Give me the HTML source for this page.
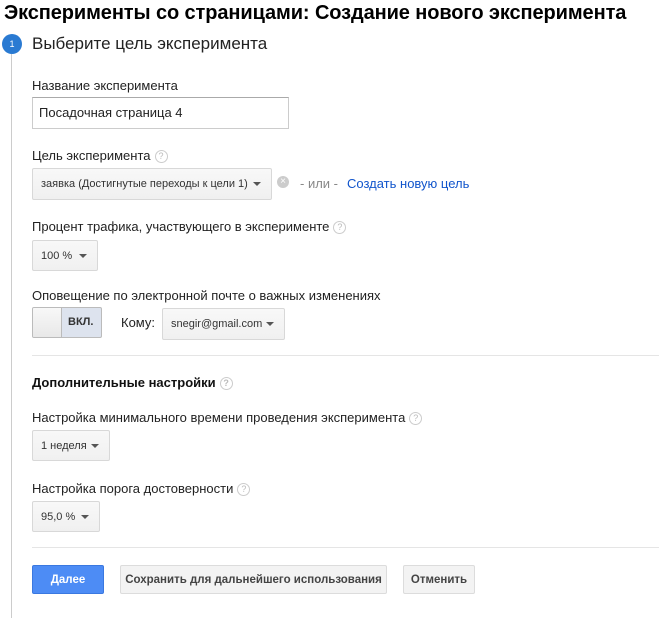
<!DOCTYPE html>
<html><head><meta charset="utf-8"><style>
*{box-sizing:border-box;margin:0;padding:0}
body{width:659px;height:618px;background:#fff;font-family:"Liberation Sans",Arial,sans-serif;color:#222;position:relative;overflow:hidden}
.a{position:absolute;white-space:nowrap}
.lbl{font-size:13px;color:#222}
.q{display:inline-block;width:13px;height:13px;border:1px solid #ccc;border-radius:50%;font-size:9px;color:#bbb;text-align:center;line-height:11px;vertical-align:1px;margin-left:4px}
.sel{position:absolute;border:1px solid #d8d8d8;border-radius:2px;background:linear-gradient(#f8f8f8,#f0f0f0);font-size:11px;color:#333;padding-left:8px;display:flex;align-items:center}
.sel:after{content:"";position:absolute;right:10px;top:50%;margin-top:-2px;border-left:4px solid transparent;border-right:4px solid transparent;border-top:4px solid #555}
.hr{position:absolute;left:32px;right:0;height:1px;background:#e5e5e5}
.btn{position:absolute;top:565px;height:29px;border:1px solid #dcdcdc;border-radius:2px;background:#f3f3f3;font-size:11.5px;font-weight:bold;color:#444;display:flex;align-items:center;justify-content:center;white-space:nowrap}
</style></head><body>
<div class="a" style="left:4px;top:2px;font-size:20px;font-weight:bold;color:#000;letter-spacing:-0.1px">Эксперименты со страницами: Создание нового эксперимента</div>
<div class="a" style="left:11px;top:54px;width:1px;height:564px;background:#ccc"></div>
<div class="a" style="left:2px;top:34px;width:20px;height:20px;border-radius:50%;background:#2a7ad2;color:#fff;font-size:9px;text-align:center;line-height:20px">1</div>
<div class="a" style="left:32px;top:34px;font-size:17px;color:#222">Выберите цель эксперимента</div>
<div class="a lbl" style="left:32px;top:78px">Название эксперимента</div>
<div class="a" style="left:32px;top:97px;width:257px;height:32px;border:1px solid #ccc;border-top-color:#aaa;font-size:13px;padding-left:6px;line-height:30px">Посадочная страница 4</div>
<div class="a lbl" style="left:32px;top:148px">Цель эксперимента<span class="q">?</span></div>
<div class="sel" style="left:32px;top:168px;width:240px;height:32px">заявка (Достигнутые переходы к цели 1)</div>
<div class="a" style="left:277px;top:176px;width:12px;height:12px;border-radius:50%;background:#ccc;color:#fff;font-size:10px;line-height:12px;text-align:center">×</div>
<div class="a" style="left:300px;top:176px;font-size:13px;color:#888">- или -</div>
<div class="a" style="left:347px;top:176px;font-size:13px;color:#15c">Создать новую цель</div>
<div class="a lbl" style="left:32px;top:219px">Процент трафика, участвующего в эксперименте<span class="q">?</span></div>
<div class="sel" style="left:32px;top:240px;width:66px;height:31px">100 %</div>
<div class="a lbl" style="left:32px;top:288px">Оповещение по электронной почте о важных изменениях</div>
<div class="a" style="left:32px;top:307px;width:70px;height:31px;border:1px solid #bbb;border-radius:2px;background:#dde3ee;overflow:hidden">
<div style="position:absolute;left:0;top:0;width:29px;height:29px;background:linear-gradient(#f8f8f8,#e8e8e8);border-right:1px solid #bbb"></div>
<div style="position:absolute;left:35px;top:8px;font-size:11px;font-weight:bold;color:#333">ВКЛ.</div></div>
<div class="a lbl" style="left:121px;top:315px">Кому:</div>
<div class="sel" style="left:162px;top:308px;width:123px;height:32px">snegir@gmail.com</div>
<div class="hr" style="top:355px"></div>
<div class="a" style="left:32px;top:375px;font-size:13px;font-weight:bold;color:#111">Дополнительные настройки<span class="q">?</span></div>
<div class="a lbl" style="left:32px;top:410px">Настройка минимального времени проведения эксперимента<span class="q">?</span></div>
<div class="sel" style="left:32px;top:430px;width:78px;height:31px">1 неделя</div>
<div class="a lbl" style="left:32px;top:481px">Настройка порога достоверности<span class="q">?</span></div>
<div class="sel" style="left:32px;top:501px;width:68px;height:31px">95,0 %</div>
<div class="hr" style="top:547px"></div>
<div class="btn" style="left:32px;width:72px;background:#4d8cf5;border-color:#3a78e0;color:#fff">Далее</div>
<div class="btn" style="left:120px;width:267px">Сохранить для дальнейшего использования</div>
<div class="btn" style="left:403px;width:72px">Отменить</div>
</body></html>
